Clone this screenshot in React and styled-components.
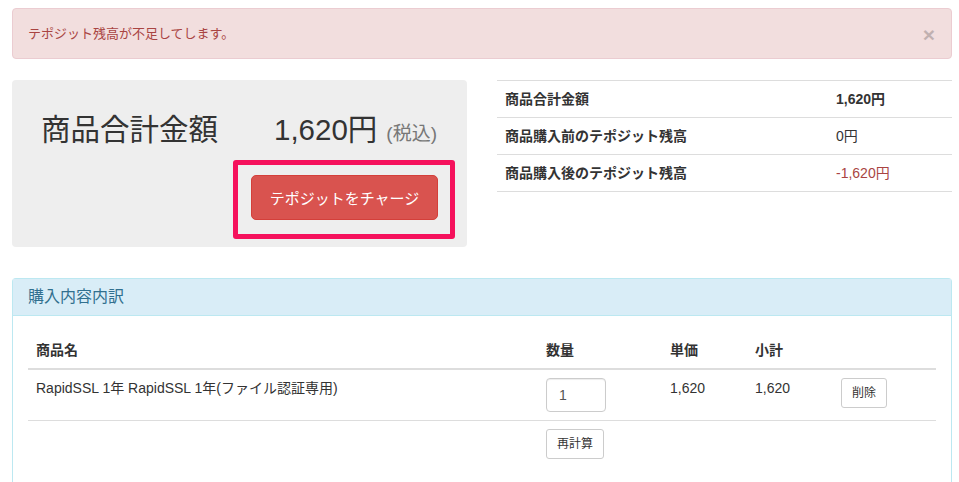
import styled, { createGlobalStyle } from "styled-components";

const GlobalStyle = createGlobalStyle`
  html, body {
    margin: 0;
    padding: 0;
    background: #fff;
  }
  body {
    font-family: "Liberation Sans", "Noto Sans CJK JP", sans-serif;
    font-size: 14px;
    line-height: 20px;
    color: #333;
  }
  * { box-sizing: border-box; }
`;

const Page = styled.div`
  padding: 8px 7px 0 12px;
  width: 959px;
`;

const Alert = styled.div`
  display: flex;
  align-items: center;
  justify-content: space-between;
  height: 51px;
  padding: 0 15px 0 15px;
  background: #f2dede;
  border: 1px solid #ebccd1;
  border-radius: 4px;
  color: #a94442;
  font-size: 13px;
`;

const Close = styled.span`
  font-size: 21px;
  font-weight: bold;
  color: #000;
  opacity: 0.2;
  margin-right: 1px;
  margin-top: 2px;
`;

const TopRow = styled.div`
  display: grid;
  grid-template-columns: 455px 455px;
  column-gap: 30px;
  margin-top: 21px;
`;

const Well = styled.div`
  background: #eee;
  border-radius: 4px;
  height: 167px;
  padding: 30px 30px 8px 29px;
  display: flex;
  flex-direction: column;
`;

const TotalLine = styled.div`
  display: flex;
  justify-content: space-between;
  align-items: baseline;
  height: 39px;
  line-height: 39px;
`;

const TotalLabel = styled.span`
  font-size: 29.5px;
  color: #333;
`;

const TotalPrice = styled.span`
  font-size: 29.5px;
  color: #333;
`;

const TaxNote = styled.small`
  font-size: 19px;
  color: #777;
  margin-left: 9px;
`;

const Highlight = styled.div`
  align-self: flex-end;
  margin-top: 11px;
  margin-right: -18px;
  border: 5px solid #f5115c;
  border-radius: 3px;
  padding: 10px 12px 14px 13px;
`;

const ChargeButton = styled.button`
  width: 187px;
  height: 45px;
  border: 1px solid #d43f3a;
  border-radius: 5px;
  background: #d9534f;
  color: #fff;
  font-family: inherit;
  font-size: 15px;
  display: block;
`;

const SummaryTable = styled.table`
  width: 100%;
  border-collapse: collapse;
  border-bottom: 1px solid #ddd;
  align-self: start;
`;

const SummaryCell = styled.td`
  border-top: 1px solid #ddd;
  height: 37px;
  padding: 0 8px;
  font-weight: ${(p) => (p.$bold ? "bold" : "normal")};
  color: ${(p) => (p.$danger ? "#a94442" : "#333")};
  width: ${(p) => p.$w || "auto"};
`;

const Panel = styled.div`
  margin-top: 31px;
  border: 1px solid #bce8f1;
  border-radius: 4px 4px 0 0;
  border-bottom: none;
`;

const PanelHeading = styled.div`
  background: #d9edf7;
  border-bottom: 1px solid #bce8f1;
  color: #31708f;
  font-size: 16px;
  height: 37px;
  line-height: 36px;
  padding: 0 15px;
`;

const PanelBody = styled.div`
  padding: 15px 15px 30px 15px;
`;

const CartTable = styled.table`
  width: 100%;
  border-collapse: collapse;
`;

const Th = styled.th`
  text-align: left;
  font-weight: bold;
  padding: 8px;
  height: 38px;
  vertical-align: bottom;
  border-bottom: 2px solid #ddd;
  width: ${(p) => p.$w || "auto"};
`;

const Td = styled.td`
  padding: 8px;
  vertical-align: top;
  border-top: ${(p) => (p.$first ? "none" : "1px solid #ddd")};
`;

const QtyInput = styled.input`
  display: block;
  width: 60px;
  height: 34px;
  border: 1px solid #ccc;
  border-radius: 4px;
  padding: 0 12px;
  font-family: inherit;
  font-size: 14px;
  color: #555;
  box-shadow: inset 0 1px 1px rgba(0, 0, 0, 0.075);
`;

const SmallButton = styled.button`
  display: block;
  height: 30px;
  padding: 0 10px;
  border: 1px solid #ccc;
  border-radius: 3px;
  background: #fff;
  color: #333;
  font-family: inherit;
  font-size: 12px;
  line-height: 1.5;
`;

export default function App() {
  return (
    <>
      <GlobalStyle />
      <Page>
        <Alert>
          <span>テポジット残高が不足してします。</span>
          <Close>×</Close>
        </Alert>

        <TopRow>
          <Well>
            <TotalLine>
              <TotalLabel>商品合計金額</TotalLabel>
              <TotalPrice>
                1,620円<TaxNote>(税込)</TaxNote>
              </TotalPrice>
            </TotalLine>
            <Highlight>
              <ChargeButton>テポジットをチャージ</ChargeButton>
            </Highlight>
          </Well>

          <SummaryTable>
            <tbody>
              <tr>
                <SummaryCell $bold $w="331px">商品合計金額</SummaryCell>
                <SummaryCell $bold>1,620円</SummaryCell>
              </tr>
              <tr>
                <SummaryCell $bold>商品購入前のテポジット残高</SummaryCell>
                <SummaryCell>0円</SummaryCell>
              </tr>
              <tr>
                <SummaryCell $bold>商品購入後のテポジット残高</SummaryCell>
                <SummaryCell $danger>-1,620円</SummaryCell>
              </tr>
            </tbody>
          </SummaryTable>
        </TopRow>

        <Panel>
          <PanelHeading>購入内容内訳</PanelHeading>
          <PanelBody>
            <CartTable>
              <thead>
                <tr>
                  <Th $w="510px">商品名</Th>
                  <Th $w="124px">数量</Th>
                  <Th $w="85px">単価</Th>
                  <Th $w="86px">小計</Th>
                  <Th></Th>
                </tr>
              </thead>
              <tbody>
                <tr>
                  <Td $first>RapidSSL 1年 RapidSSL 1年(ファイル認証専用)</Td>
                  <Td $first>
                    <QtyInput defaultValue="1" />
                  </Td>
                  <Td $first>1,620</Td>
                  <Td $first>1,620</Td>
                  <Td $first>
                    <SmallButton>削除</SmallButton>
                  </Td>
                </tr>
                <tr>
                  <Td></Td>
                  <Td>
                    <SmallButton>再計算</SmallButton>
                  </Td>
                  <Td></Td>
                  <Td></Td>
                  <Td></Td>
                </tr>
              </tbody>
            </CartTable>
          </PanelBody>
        </Panel>
      </Page>
    </>
  );
}
